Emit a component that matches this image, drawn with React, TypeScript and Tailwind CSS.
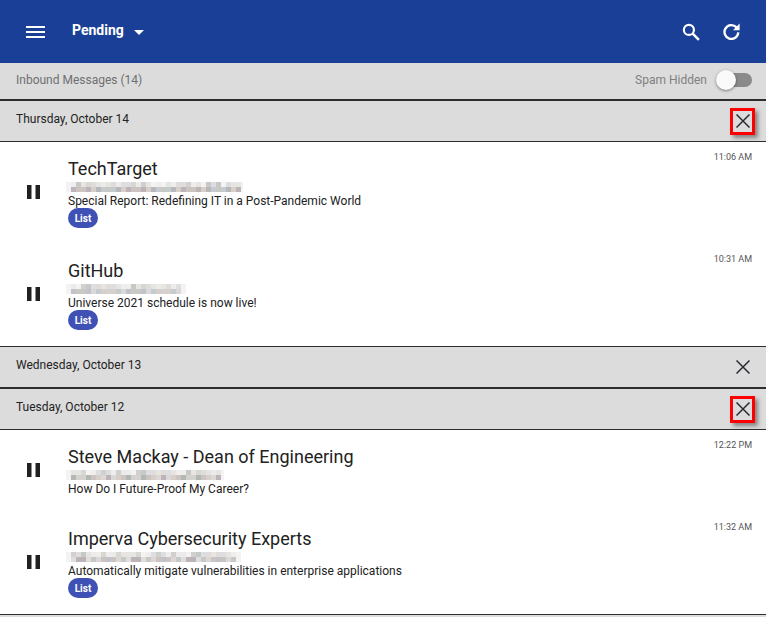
import React from "react";

const Pause = () => (
  <svg width="13" height="14" viewBox="0 0 13 14" className="block">
    <rect x="0" y="0" width="4.5" height="14" fill="#212121" />
    <rect x="8.5" y="0" width="4.5" height="14" fill="#212121" />
  </svg>
);

const Close = () => (
  <svg width="14" height="14" viewBox="0 0 14 14" className="block">
    <path d="M0.5 0.5 L13.5 13.5 M13.5 0.5 L0.5 13.5" stroke="#2a2a33" strokeWidth="1.5" fill="none" />
  </svg>
);

const light = ["#f0eeec", "#e6e6e0", "#d8d8d2", "#eceaea", "#e0dcdc", "#c8c8c6", "#e8e4e0", "#dcdee2", "#f4f2f2", "#d0d0ce"];
const dark = ["#c8c8c4", "#b8b8bc", "#d4d2ce", "#c4ccd0", "#bcb4b8", "#d8d0c8", "#c0c4ca", "#dcd8d8", "#b4b8b4", "#ccc4c0", "#e0dedc"];

const Blur = ({ seed, w }: { seed: number; w: number }) => {
  const cols = Math.ceil(w / 5);
  const cell = (row: number, i: number) => {
    const n = (i * 7 + seed * 13 + row * 5 + ((i * i * 3) % 11)) % (row ? dark.length : light.length);
    if (i === 0 || i === cols - 1) return "#f4f2f2";
    return row ? dark[n] : light[n];
  };
  return (
    <div className="flex flex-col overflow-hidden" style={{ width: w }}>
      {[0, 1].map((row) => (
        <div key={row} className="flex h-[5px]">
          {Array.from({ length: cols }, (_, i) => (
            <div key={i} className="h-full w-[5px] shrink-0" style={{ background: cell(row, i) }} />
          ))}
        </div>
      ))}
    </div>
  );
};

const Row = ({ name, title, time, badge, blur, blurW, h }: { name: string; title: string; time: string; badge?: boolean; blur: number; blurW: number; h: string }) => (
  <div className={`flex items-stretch bg-white ${h}`}>
    <div className="flex w-[68px] shrink-0 items-center pb-[2px] pl-[27px]">
      <Pause />
    </div>
    <div className="min-w-0 flex-1 pt-[15px]">
      <div className="text-[18px] leading-[24px] text-[#212121]">{name}</div>
      <div className="mt-[1px] -ml-[2px]"><Blur seed={blur} w={blurW} /></div>
      <div className="mt-[2px] text-[12px] leading-[14px] text-[#212121]">{title}</div>
      {badge && (
        <div className="flex h-[20px] w-[30px] items-center justify-center rounded-full bg-[#3f51b5] text-[10px] font-bold text-white">List</div>
      )}
    </div>
    <div className="w-[66px] shrink-0 pt-[9px] pr-[14px] text-right text-[9px] leading-[12px] text-[#555555] whitespace-nowrap">{time}</div>
  </div>
);

const DayHeader = ({ label, boxed, cls }: { label: string; boxed?: boolean; cls: string }) => (
  <div className={`flex items-center justify-between bg-[#dcdcdc] pl-[16px] pr-[11px] ${cls}`}>
    <span className="-mt-[4px] text-[12px] text-[#222222]">{label}</span>
    <div className={boxed ? "flex h-[27px] w-[25px] items-center justify-center border-[3px] border-[#ff0000] shadow-[3px_3px_4px_rgba(0,0,0,0.4)]" : "flex h-[27px] w-[25px] items-center justify-center"}>
      <Close />
    </div>
  </div>
);

export default function App() {
  return (
    <div className="h-[617px] w-[766px] overflow-hidden bg-white font-['Roboto',sans-serif]">
      <header className="flex h-[63px] items-center bg-[#1a3f96] text-white">
        <div className="ml-[26px] flex h-[12px] w-[19px] flex-col justify-between">
          <div className="h-[2px] bg-white" />
          <div className="h-[2px] bg-white" />
          <div className="h-[2px] bg-white" />
        </div>
        <span className="ml-[27px] -mt-[2px] text-[14px] font-bold">Pending</span>
        <svg width="10" height="5" viewBox="0 0 10 5" className="ml-[10px] mt-[1px]"><path d="M0 0 L10 0 L5 5 Z" fill="#fff" /></svg>
        <div className="ml-auto mr-[26px] flex items-center gap-[23px]">
          <svg width="18" height="18" viewBox="0 0 19 19" fill="none">
            <circle cx="7.3" cy="7.3" r="5.3" stroke="#fff" strokeWidth="2.3" />
            <path d="M11.3 11.3 L17.8 17.8" stroke="#fff" strokeWidth="2.6" />
          </svg>
          <svg width="17" height="17" viewBox="0 0 18 18" fill="none">
            <path d="M14.3 4.6 A7.3 7.3 0 1 0 16.2 10" stroke="#fff" strokeWidth="2.5" />
            <path d="M17.6 0.6 V7.6 H10.6 Z" fill="#fff" />
          </svg>
        </div>
      </header>

      <div className="flex h-[38px] items-center justify-between border-b-[2px] border-b-[#2e2e2e] bg-[#dcdcdc] pb-[3px] pl-[16px] pr-[14px]">
        <span className="text-[12px] text-[#707070]">Inbound Messages (14)</span>
        <div className="flex items-center">
          <span className="text-[12px] text-[#808080]">Spam Hidden</span>
          <div className="relative ml-[15px] h-[14px] w-[30px] rounded-full bg-[#8a8a8a]">
            <div className="absolute -left-[6px] -top-[3px] h-[20px] w-[20px] rounded-full bg-[#fafafa] shadow-[0_1px_3px_rgba(0,0,0,0.45)]" />
          </div>
        </div>
      </div>

      <DayHeader label="Thursday, October 14" boxed cls="h-[41px] border-b-[1px] border-b-[#2e2e2e]" />
      <Row h="h-[102px]" name="TechTarget" title="Special Report: Redefining IT in a Post-Pandemic World" time="11:06 AM" badge blur={0} blurW={177} />
      <Row h="h-[102px]" name="GitHub" title="Universe 2021 schedule is now live!" time="10:31 AM" badge blur={1} blurW={120} />
      <div className="h-[1px] bg-[#2e2e2e]" />
      <DayHeader label="Wednesday, October 13" cls="h-[42px] border-b-[2px] border-b-[#2e2e2e]" />
      <DayHeader label="Tuesday, October 12" boxed cls="h-[41px] border-b-[1px] border-b-[#2e2e2e]" />
      <Row h="h-[82px]" name="Steve Mackay - Dean of Engineering" title="How Do I Future-Proof My Career?" time="12:22 PM" blur={2} blurW={158} />
      <Row h="h-[102px]" name="Imperva Cybersecurity Experts" title="Automatically mitigate vulnerabilities in enterprise applications" time="11:32 AM" badge blur={3} blurW={175} />
      <div className="h-[1px] bg-[#2e2e2e]" />
      <div className="h-[3px] bg-[#dddddd]" />
    </div>
  );
}
